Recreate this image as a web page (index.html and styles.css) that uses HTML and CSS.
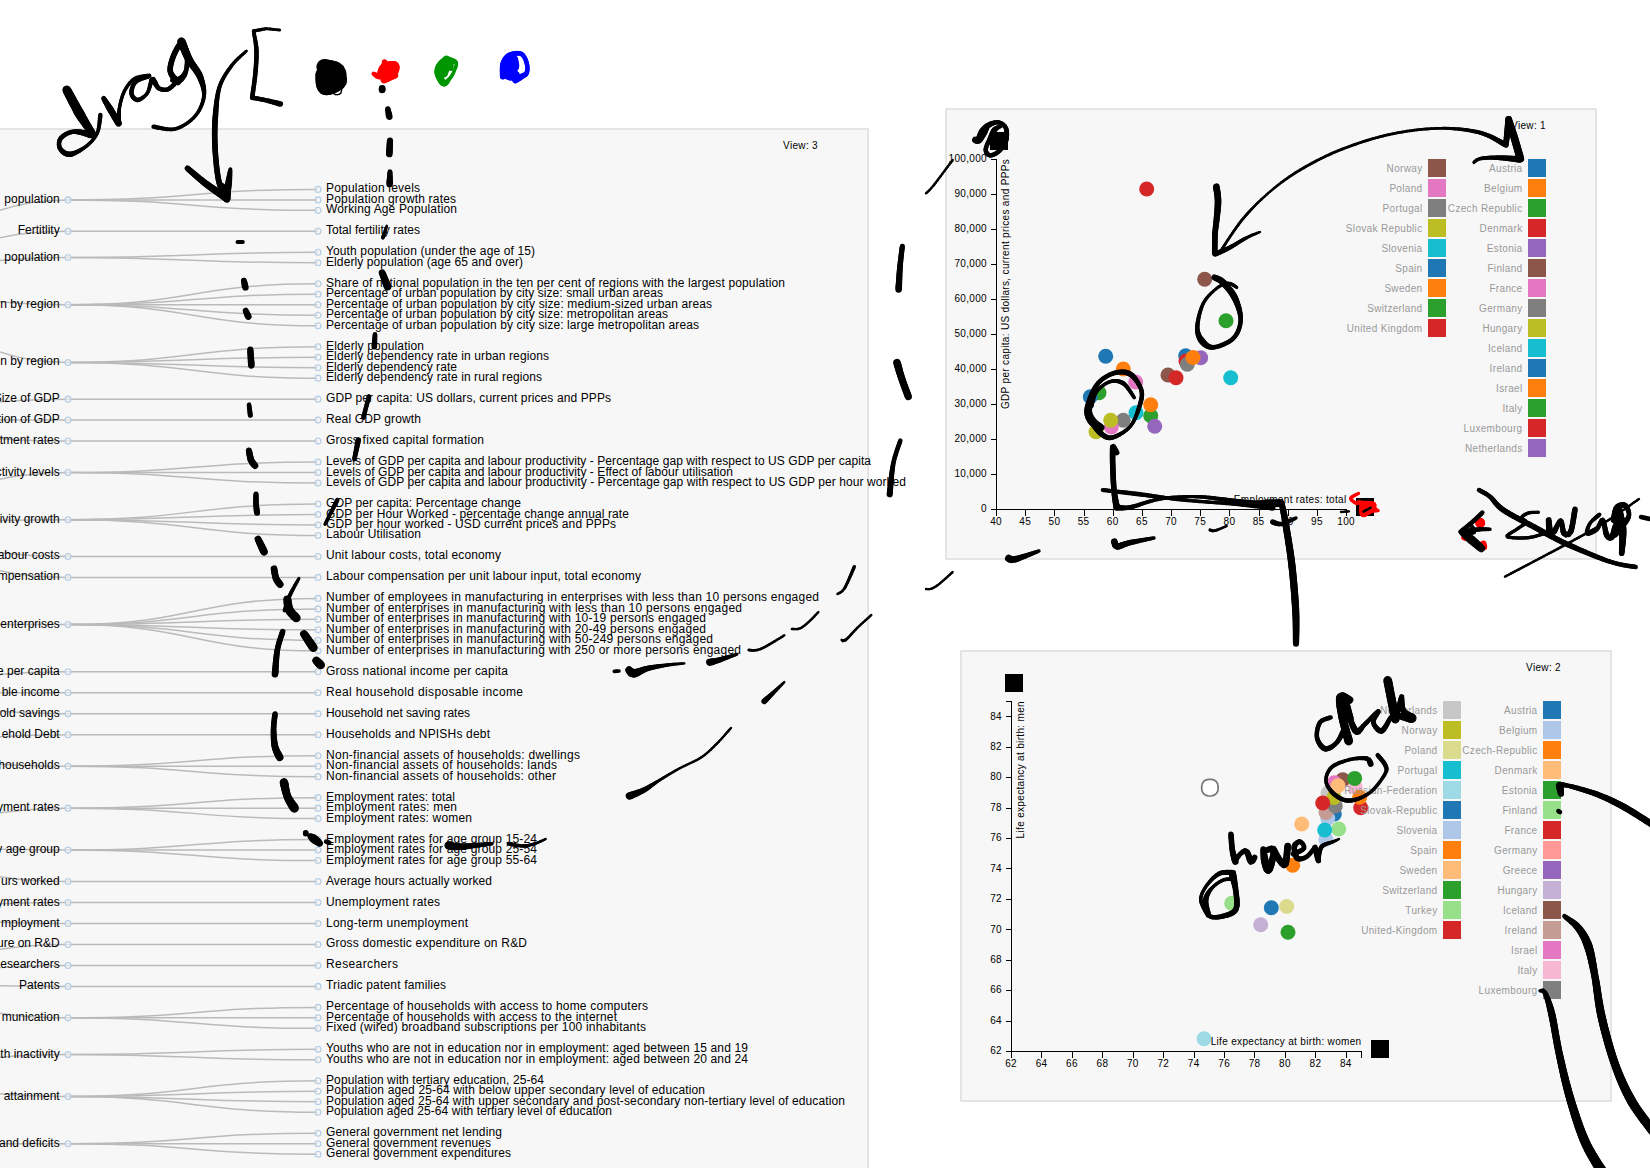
FILE: index.html
```html
<!DOCTYPE html>
<html lang="en">
<head>
<meta charset="utf-8">
<title>Indicator views</title>
<link rel="stylesheet" href="styles.css">
</head>
<body>
<main class="board">
  <section class="view view-tree">
    <svg id="tree" class="tree" width="868" height="1040"></svg>
  </section>
  <div class="charts">
    <section class="view"><svg id="view1" class="chart" width="652" height="452" viewBox="-1 -1 652 452"></svg></section>
    <section class="view view-offset"><svg id="view2" class="chart" width="652" height="452" viewBox="-1 -1 652 452"></svg></section>
  </div>
  <svg id="ink" class="ink" width="1650" height="1168"></svg>
</main>
<script src="script.js"></script>
</body>
</html>
```
FILE: styles.css
```css
body {
  margin: 0;
  background: #fff;
  font-family: "Liberation Sans", Arial, sans-serif;
}

.board {
  position: relative;
  display: flex;
  width: 1650px;
  height: 1168px;
  overflow: hidden;
}

.view-tree {
  flex: none;
  width: 868px;
  padding-top: 128px;
}

.charts {
  display: flex;
  flex-direction: column;
  gap: 90px;
  padding: 108px 0 0 77px;
}

.view svg {
  display: block;
}

.view-offset {
  margin-left: 15px;
}

.tree,
.chart {
  overflow: visible;
}

.ink {
  position: absolute;
  left: 0;
  top: 0;
  pointer-events: none;
}

.panel {
  fill: #f7f7f7;
  stroke: #ddd;
  stroke-width: 1.5;
}

.link {
  fill: none;
  stroke: #bababa;
  stroke-width: 1.5;
}

.node {
  fill: #f7f7f7;
  fill-opacity: 0.6;
  stroke: #b9cfe4;
  stroke-width: 1.3;
}

.label {
  font-size: 12px;
  fill: #000;
}

.small {
  font-size: 10px;
  letter-spacing: 0.33px;
  fill: #000;
}

.legend {
  fill: #999;
}

.axis {
  fill: none;
  stroke: #000;
  stroke-width: 1;
  shape-rendering: crispEdges;
}

.hollow {
  fill: #fff;
  stroke: #777;
  stroke-width: 1.7;
}

.end {
  text-anchor: end;
}

.middle {
  text-anchor: middle;
}
```
FILE: script.js
```js
const NS = "http://www.w3.org/2000/svg";

function add(parent, tag, attrs, text) {
  const el = document.createElementNS(NS, tag);
  for (const k in attrs) el.setAttribute(k, attrs[k]);
  if (text !== undefined) el.textContent = text;
  parent.appendChild(el);
  return el;
}

/* ---------- indicator tree ---------- */

const topics = [
  [["population", ["Population levels", "Population growth rates", "Working Age Population"]],
   ["Fertitlity", ["Total fertility rates"]],
   ["population", ["Youth population (under the age of 15)", "Elderly population (age 65 and over)"]],
   ["n by region", ["Share of national population in the ten per cent of regions with the largest population", "Percentage of urban population by city size: small urban areas", "Percentage of urban population by city size: medium-sized urban areas", "Percentage of urban population by city size: metropolitan areas", "Percentage of urban population by city size: large metropolitan areas"]],
   ["n by region", ["Elderly population", "Elderly dependency rate in urban regions", "Elderly dependency rate", "Elderly dependency rate in rural regions"]]],
  [["Size of GDP", ["GDP per capita: US dollars, current prices and PPPs"]],
   ["tion of GDP", ["Real GDP growth"]],
   ["tment rates", ["Gross fixed capital formation"]]],
  [["ctivity levels", ["Levels of GDP per capita and labour productivity - Percentage gap with respect to US GDP per capita", "Levels of GDP per capita and labour productivity - Effect of labour utilisation", "Levels of GDP per capita and labour productivity - Percentage gap with respect to US GDP per hour worked"]],
   ["tivity growth", ["GDP per capita: Percentage change", "GDP per Hour Worked - percentage change annual rate", "GDP per hour worked - USD current prices and PPPs", "Labour Utilisation"]],
   ["abour costs", ["Unit labour costs, total economy"]],
   ["mpensation", ["Labour compensation per unit labour input, total economy"]]],
  [["enterprises", ["Number of employees in manufacturing in enterprises with less than 10 persons engaged", "Number of enterprises in manufacturing with less than 10 persons engaged", "Number of enterprises in manufacturing with 10-19 persons engaged", "Number of enterprises in manufacturing with 20-49 persons engaged", "Number of enterprises in manufacturing with 50-249 persons engaged", "Number of enterprises in manufacturing with 250 or more persons engaged"]]],
  [["e per capita", ["Gross national income per capita"]],
   ["ble income", ["Real household disposable income"]],
   ["old savings", ["Household net saving rates"]]],
  [["ehold Debt", ["Households and NPISHs debt"]],
   ["households", ["Non-financial assets of households: dwellings", "Non-financial assets of households: lands", "Non-financial assets of households: other"]]],
  [["yment rates", ["Employment rates: total", "Employment rates: men", "Employment rates: women"]],
   ["y age group", ["Employment rates for age group 15-24", "Employment rates for age group 25-54", "Employment rates for age group 55-64"]],
   ["urs worked", ["Average hours actually worked"]]],
  [["yment rates", ["Unemployment rates"]],
   ["mployment", ["Long-term unemployment"]]],
  [["ure on R&D", ["Gross domestic expenditure on R&D"]],
   ["esearchers", ["Researchers"]],
   ["Patents", ["Triadic patent families"]],
   ["munication", ["Percentage of households with access to home computers", "Percentage of households with access to the internet", "Fixed (wired) broadband subscriptions per 100 inhabitants"]]],
  [["uth inactivity", ["Youths who are not in education nor in employment: aged between 15 and 19", "Youths who are not in education nor in employment: aged between 20 and 24"]],
   ["attainment", ["Population with tertiary education, 25-64", "Population aged 25-64 with below upper secondary level of education", "Population aged 25-64 with upper secondary and post-secondary non-tertiary level of education", "Population aged 25-64 with tertiary level of education"]]],
  [["and deficits", ["General government net lending", "General government revenues", "General government expenditures"]]]
];

/* Advance width of every leaf label, top to bottom. */
const leafWidths = [
  94, 130, 131, 94, 209, 197, 459, 337, 386, 342, 373, 98, 223, 131, 216, 285, 95, 158,
  545, 407, 580, 195, 303, 290, 95, 175, 315, 493, 416, 380, 380, 387, 415,
  182, 197, 144, 164, 254, 231, 230, 129, 131, 146, 211, 211, 211, 166, 114, 142, 201, 72, 120,
  322, 291, 320, 422, 422, 218, 379, 519, 286, 176, 165, 185
];

function drawTree() {
  const svg = document.getElementById("tree");
  add(svg, "rect", { class: "panel", x: -50, y: 1, width: 918.2, height: 1200 });
  const links = add(svg, "g", {});
  const nodes = add(svg, "g", {});
  const step = 10.487, xTopic = -182, xGroup = 68, xLeaf = 318;
  let y = 61.4 - 2 * step, n = 0;
  const link = (x0, y0, x1, y1) => {
    const m = (x0 + x1) / 2;
    add(links, "path", { class: "link", d: `M${x0},${y0}C${m},${y0} ${m},${y1} ${x1},${y1}` });
  };
  for (const topic of topics) {
    const groupYs = [];
    for (const [name, leaves] of topic) {
      y += step;
      const ys = leaves.map(() => (y += step));
      const gy = (ys[0] + ys[ys.length - 1]) / 2;
      groupYs.push(gy);
      leaves.forEach((leaf, i) => {
        link(xGroup, gy, xLeaf, ys[i]);
        add(nodes, "circle", { class: "node", cx: xLeaf, cy: ys[i], r: 2.9 });
        add(nodes, "text", { class: "label", x: 326, y: Math.round(ys[i] + 3.02), textLength: leafWidths[n++] }, leaf);
      });
      add(nodes, "circle", { class: "node", cx: xGroup, cy: gy, r: 2.9 });
      add(nodes, "text", { class: "label end", x: 59.7, y: Math.round(gy + 3.02) }, name);
    }
    const ty = (groupYs[0] + groupYs[groupYs.length - 1]) / 2;
    groupYs.forEach(gy => link(xTopic, ty, xGroup, gy));
  }
  add(svg, "text", { class: "small end", x: 818, y: 21 }, "View: 3");
}

/* ---------- scatter plots ---------- */

const C10 = ["#1f77b4", "#ff7f0e", "#2ca02c", "#d62728", "#9467bd", "#8c564b", "#e377c2", "#7f7f7f", "#bcbd22", "#17becf"];
const C20 = ["#1f77b4", "#aec7e8", "#ff7f0e", "#ffbb78", "#2ca02c", "#98df8a", "#d62728", "#ff9896", "#9467bd", "#c5b0d5", "#8c564b", "#c49c94", "#e377c2", "#f7b6d2", "#7f7f7f", "#c7c7c7", "#bcbd22", "#dbdb8d", "#17becf", "#9edae5"];

function drawChart(o) {
  const svg = document.getElementById(o.id);
  add(svg, "rect", { class: "panel", x: 0, y: 0, width: 650, height: 450 });
  const sx = v => 50.5 + 350 * (v - o.x[0]) / (o.x[1] - o.x[0]);
  const sy = v => 400.5 - 350 * (v - o.y[0]) / (o.y[1] - o.y[0]);
  add(svg, "path", { class: "axis", d: "M44.5,50.5H50.5V400.5H44.5M50.5,406.5V400.5H400.5V406.5" });
  for (let v = o.x[0]; v <= o.x[1]; v += o.x[2]) {
    add(svg, "path", { class: "axis", d: `M${sx(v)},400.5v6` });
    add(svg, "text", { class: "small middle", x: sx(v) - 0.4, y: 416 }, v);
  }
  for (let v = o.y[0]; v <= o.y[1]; v += o.y[2]) {
    add(svg, "path", { class: "axis", d: `M44.5,${sy(v)}h6` });
    add(svg, "text", { class: "small end", x: 41, y: Math.round(sy(v) + 2.8) }, v.toLocaleString("en-US"));
  }
  add(svg, "rect", { x: 44, y: 23, width: 18, height: 18 });
  add(svg, "rect", { x: 410, y: 389, width: 18, height: 18 });
  for (const [x, y, c] of o.dots)
    add(svg, "circle", { cx: x - o.left, cy: y - o.top, r: 7.5, fill: c });
  if (o.hollow) add(svg, "rect", { class: "hollow", x: 240.7, y: 128.4, width: 16.4, height: 16.6, rx: 7, ry: 7 });
  o.countries.forEach((name, i) => {
    const x = i < 15 ? 582 : 482, y = 50 + 20 * (i % 15);
    add(svg, "rect", { x, y, width: 18, height: 18, fill: o.palette[i % o.palette.length] });
    add(svg, "text", { class: "small legend end", x: x - 5.5, y: y + 13 }, name);
  });
  add(svg, "text", { class: "small end", x: 400.5, y: 394 }, o.xLabel);
  add(svg, "text", { class: "small end", x: -50, y: 63, transform: "rotate(-90)" }, o.yLabel);
  add(svg, "text", { class: "small end", x: 600, y: 20 }, o.title);
}

drawTree();

drawChart({
  id: "view1", left: 946, top: 109, title: "View: 1", palette: C10,
  x: [40, 100, 5], y: [0, 100000, 10000],
  xLabel: "Employment rates: total",
  yLabel: "GDP per capita: US dollars, current prices and PPPs",
  countries: ["Austria", "Belgium", "Czech Republic", "Denmark", "Estonia", "Finland", "France", "Germany", "Hungary", "Iceland", "Ireland", "Israel", "Italy", "Luxembourg", "Netherlands", "Norway", "Poland", "Portugal", "Slovak Republic", "Slovenia", "Spain", "Sweden", "Switzerland", "United Kingdom"],
  dots: [[1146.7, 189, C10[3]], [1204.7, 279.3, C10[5]], [1226, 320.7, C10[2]], [1105.7, 356.3, C10[0]], [1123.3, 369, C10[1]],
    [1185.7, 355.7, C10[0]], [1186, 361, C10[3]], [1187.3, 364.3, C10[7]], [1200.7, 357.7, C10[4]], [1193, 357.5, C10[1]],
    [1168, 375, C10[5]], [1176, 377.7, C10[3]], [1230.7, 377.7, C10[9]], [1135.7, 382, C10[6]], [1099, 392.7, C10[2]], [1090.3, 396.7, C10[0]],
    [1150.7, 415.7, C10[2]], [1150.7, 404.7, C10[1]], [1136, 412.7, C10[9]], [1154.7, 426.3, C10[4]],
    [1123.3, 420.3, C10[7]], [1111.3, 427, C10[6]], [1110.7, 420.3, C10[8]], [1096, 431.7, C10[8]]]
});

drawChart({
  id: "view2", left: 961, top: 651, title: "View: 2", palette: C20, hollow: true,
  x: [62, 85, 2], y: [62, 85, 2],
  xLabel: "Life expectancy at birth: women",
  yLabel: "Life expectancy at birth: men",
  countries: ["Austria", "Belgium", "Czech-Republic", "Denmark", "Estonia", "Finland", "France", "Germany", "Greece", "Hungary", "Iceland", "Ireland", "Israel", "Italy", "Luxembourg", "Netherlands", "Norway", "Poland", "Portugal", "Russian-Federation", "Slovak-Republic", "Slovenia", "Spain", "Sweden", "Switzerland", "Turkey", "United-Kingdom"],
  dots: [[1301.7, 824, C20[3]], [1292.7, 865.3, C20[2]], [1231.7, 903.3, C20[5]], [1271.3, 907.7, C20[0]], [1286.7, 906.5, C20[17]],
    [1260.7, 924.7, C20[9]], [1288, 932.3, C20[4]], [1204, 1038.7, C20[19]],
    [1334.3, 814, C20[0]], [1327.7, 818.5, C20[1]], [1326, 812.5, C20[11]], [1328, 793, C20[15]], [1335.3, 806, C20[14]], [1334, 797.5, C20[16]],
    [1355.3, 787, C20[13]], [1360.7, 807.7, C20[6]], [1359.7, 797.2, C20[2]], [1342.7, 779.7, C20[10]], [1334.3, 782.8, C20[12]],
    [1338, 785.8, C20[3]], [1354.7, 778.4, C20[4]], [1322.7, 803, C20[6]], [1338.7, 829, C20[5]], [1326, 839.3, C20[1]], [1324.7, 830, C20[18]]]
});

/* ---------- pen notes ----------
   Each sheet has an origin and a unit; a stroke is a list of x, y, pen width. */

const sheets = [
  { at: [0, 0], unit: [1 / 2.8, 1 / 3], strokes: [
    [187,270,8, 225,345,9, 262,406,6], [256,404,7, 205,395,4, 170,415,4, 168,445,4, 195,463,5, 240,440,3, 272,400,3, 281,345,4],
    [290,295,4, 310,330,6, 332,370,6], [332,370,5, 335,320,3, 350,270,3, 378,235,3, 418,226,3],
    [418,228,4, 380,245,4, 368,280,4, 385,300,4, 412,280,3, 425,240,4, 432,245,5, 445,265,4, 470,268,4, 495,245,4],
    [498,246,6, 477,215,5, 485,170,5, 508,130,5, 524,165,5, 520,215,4, 502,240,6, 484,240,5],
    [508,125,8, 530,180,7, 560,230,6, 571,290,3.5, 545,350,3, 490,387,3, 430,380,4],
    [783,90,2.5, 745,86,2.5], [745,86,2.5, 710,93,3], [710,93,3, 718,150,4, 715,220,4, 706,293,4], [706,293,4, 745,301,4, 785,312,5],
    [690,153,2.5, 650,195,3, 615,260,3.5, 603,350,5, 602,440,5, 612,540,5, 632,590,6],
    [525,505,5, 575,550,6, 635,595,7], [645,508,3, 640,550,6, 635,598,6], [622,560,6, 634,585,8],
    [908,201,14, 940,215,18, 952,232,11, 945,250,14, 910,262,14, 905,225,13, 930,232,20], [957,262,1, 954,280,1, 940,284,1, 930,277,1],
    [1070,265,6, 1070,270,6], [1086,327,4.5, 1090,350,6], [1092,422,5.5, 1090,462,6], [1092,515,4, 1091,552,6],
    [1083,678,2, 1072,713,3.5], [1070,818,6, 1085,860,7], [665,726,3.5, 680,726,3.5], [683,842,5, 687,862,6] ] },
  { color: "#f00", at: [0, 0], unit: [1 / 2.8, 1 / 3], strokes: [
    [1046,221,3, 1062,228,5, 1080,205,11, 1103,199,9, 1092,220,13, 1075,240,6], [1077,186,4, 1078,200,6], [1068,228,3, 1103,225,8] ] },
  { color: "#009600", at: [0, 0], unit: [1 / 2.8, 1 / 3], strokes: [
    [1250,178,6, 1232,200,8, 1228,222,7, 1243,250,6, 1262,232,3, 1272,212,3, 1277,188,3, 1252,180,6, 1248,195,9, 1242,220,8], [1262,185,5, 1262,205,5] ] },
  { color: "#00f", at: [0, 0], unit: [1 / 2.8, 1 / 3], strokes: [
    [1408,230,5, 1412,190,7, 1428,165,5, 1460,162,4, 1475,190,4, 1475,218,4, 1460,230,5, 1443,240,6], [1425,190,10, 1424,220,12, 1442,226,9], [1440,178,6, 1440,200,9] ] },
  { at: [0, 280], unit: [1 / 3, 1 / 3], strokes: [
    [737,92,5, 745,110,6], [751,209,5.5, 754,256,6], [747,374,4, 751,406,4.5], [747,512,5.5, 753,540,6, 765,557,6],
    [768,642,4.5, 768,670,5, 771,698,5.5], [774,777,6, 792,815,7], [822,866,6, 828,895,6, 840,913,6.5],
    [897,895,2.5, 870,945,3.5, 853,992,3], [862,958,7, 868,990,8, 889,1014,8], [848,1055,5, 832,1110,5, 825,1183,6],
    [912,1062,7, 940,1103,8], [949,1142,7, 962,1155,8], [1125,163,4, 1123,200,5], [1107,349,4, 1090,413,4], [1075,480,5, 1063,538,4], [1012,660,4, 975,733,3] ] },
  { at: [0, 680], unit: [1 / 2.8, 1 / 3], strokes: [
    [770,102,5, 766,150,5, 770,200,6, 783,232,7], [795,307,8, 805,350,7, 824,384,8.5], [856,458,5, 856,461,5],
    [868,468,3, 882,479,8, 895,490,6], [913,485,4, 922,488,4], [1256,496,8, 1290,500,6, 1378,491,3], [1424,491,3.5, 1465,498,3, 1500,490,2.5, 1528,477,2] ] },
  { at: [300, 400], unit: [0.3954, 1 / 3], strokes: [
    [1402,500,3, 1377,565,2.5, 1359,582,2], [1244,687,2, 1265,685,2, 1290,662,2, 1311,636,2], [1370,720,2, 1380,720,2.5, 1410,683,2, 1445,645,2],
    [1135,750,2.5, 1165,747,2.2, 1225,706,2], [1036,787,7, 1060,780,5, 1105,763,2.5], [795,814,3.5, 807,813,3],
    [832,810,6, 845,820,8, 880,805,5, 930,795,3, 972,790,2], [1174,904,5.5, 1200,875,3.5, 1225,846,2],
    [833,1188,7, 870,1170,5, 910,1140,2.5, 960,1105,2, 1015,1072,2, 1055,1030,2, 1090,984,2] ] },
  { at: [820, 140], unit: [1 / 3, 1 / 3], strokes: [
    [398,60,2, 340,137,2, 318,160,2], [247,319,4.5, 240,380,5, 236,448,6], [231,668,7, 245,715,6.5, 265,770,6.5],
    [241,902,4, 220,970,4, 209,1063,5.5], [398,1296,2, 360,1330,2, 335,1346,2, 318,1347,2] ] },
  { at: [900, 90], unit: [1 / 3, 1 / 3], strokes: [
    [226,150,6, 236,150,6, 250,125,8, 265,106,5, 295,97,4, 318,115,4, 316,155,5, 295,185,4, 270,196,4, 257,180,4, 270,145,4, 285,118,5, 305,108,3],
    [949,290,6, 954,340,6, 945,430,5], [945,430,5, 944,490,5], [945,492,5, 985,475,4, 1040,443,3, 1080,426,2],
    [943,562,5, 970,578,6, 1005,625,6, 1022,690,4, 1000,745,4, 940,772,4, 905,752,6, 892,710,4, 910,640,3, 950,595,2.5, 985,580,3, 1010,592,3] ] },
  { at: [1250, 90], unit: [1 / 3, 1 / 3], strokes: [
    [-85,478,2.4, -20,385,2.4, 60,305,2, 150,240,2.4, 270,180,2.4, 420,133,2.4, 570,115,2.4, 690,128,3.5, 768,165,5],
    [768,162,5, 776,88,6], [776,88,6, 795,150,7, 811,206,7], [672,217,3, 690,206,3, 740,203,4, 810,208,6] ] },
  { at: [900, 330], unit: [1 / 3, 1 / 3], strokes: [
    [603,293,6, 575,272,8, 565,235,7, 590,165,4, 640,130,4, 690,132,5, 724,180,4, 718,230,4, 690,290,3, 635,323,4, 600,308,5, 575,275,5],
    [575,230,3, 590,185,3, 630,155,3, 670,160,4, 703,203,3],
    [640,350,5, 650,368,5], [638,352,5, 638,400,5, 642,480,5, 650,532,6], [650,532,6, 690,532,4, 780,507,3, 890,500,3, 1000,512,4, 1130,525,4],
    [608,480,3.5, 720,493,4, 850,510,3, 1000,522,3, 1120,535,4], [1040,523,4, 1100,519,6, 1142,520,7],
    [1145,520,5, 1155,570,6, 1175,700,6.5, 1187,840,6.5, 1188,941,5.5], [1118,576,5, 1145,582,4, 1188,564,3],
    [930,600,3, 945,602,2.5, 980,588,2], [643,635,6, 652,649,6, 690,638,5, 762,624,3], [326,685,7, 345,688,6, 417,663,3] ] },
  { color: "#f00", at: [1250, 440], unit: [1 / 3, 1 / 3], strokes: [
    [326,160,2.5, 302,175,3, 318,190,3], [325,188,4, 368,195,5, 345,203,11, 340,222,5, 360,208,8, 385,212,2.5],
    [690,248,9, 691,249,9], [700,312,7, 703,322,5], [640,293,4, 645,296,4] ] },
  { at: [1250, 440], unit: [1 / 3, 1 / 3], strokes: [
    [340,215,2, 362,203,2], [273,216,2, 297,214,2],
    [697,218,4, 665,248,4, 632,275,4], [632,275,4, 690,268,4, 720,268,3], [636,277,5, 665,300,8, 694,325,7], [640,274,4, 670,275,5, 665,260,4],
    [687,150,4, 720,170,4, 760,210,5, 860,265,5, 950,312,5, 1080,365,4, 1157,381,4], [765,410,2, 950,312,2.2, 1060,250,2, 1167,177,2],
    [865,217,3, 835,219,3, 815,233,3, 828,247,3, 800,268,3, 772,290,3, 835,293,3, 885,280,3],
    [896,240,5, 900,275,6, 912,275,5, 932,242,4, 942,280,5, 962,275,5, 975,208,5],
    [1048,224,4, 1020,250,3, 1012,280,4, 1040,268,4, 1058,240,4, 1070,285,5, 1085,292,5, 1095,260,5],
    [1105,200,6, 1118,270,7, 1115,340,5], [1092,240,6, 1100,203,5, 1125,196,5, 1137,225,4, 1120,255,5, 1095,285,5], [1100,220,7, 1103,260,7],
    [1173,231,4, 1200,237,4] ] },
  { at: [940, 640], unit: [1 / 3, 1 / 3], strokes: [
    [878,704,7, 887,750,5, 890,800,5, 870,822,5, 815,831,4, 790,800,4, 783,770,3, 805,730,3, 840,700,4, 880,698,5],
    [885,718,4, 850,720,3, 815,745,3, 797,780,5, 805,825,5],
    [873,583,5, 877,630,5, 886,665,6], [886,660,5, 905,638,4, 920,635,5, 933,664,6, 944,652,5],
    [970,628,5, 975,665,7, 985,690,7, 997,660,6, 1000,628,6, 975,632,5], [1000,628,6, 1020,662,6, 1036,672,6, 1043,618,6],
    [1060,642,5, 1092,625,4, 1080,605,4, 1063,620,5, 1072,655,5, 1100,650,4, 1125,622,4], [1125,622,5, 1135,662,5], [1135,660,4, 1145,620,4, 1180,605,3, 1197,597,2] ] },
  { at: [1270, 640], unit: [1 / 3, 1 / 2.97], strokes: [
    [182,230,4, 150,245,4, 141,290,4, 165,323,5, 200,305,4, 225,260,5], [238,178,7, 212,170,8, 215,220,7, 236,300,8], [225,180,7, 240,235,7],
    [240,235,5, 260,272,6, 285,250,4, 325,212,4, 310,245,4, 335,270,5, 362,230,4], [353,120,8, 365,180,8, 376,235,8], [376,235,5, 395,168,4.5], [395,170,4.5, 400,210,5, 425,232,8], [390,226,5, 425,232,9],
    [302,368,6, 290,352,4, 240,355,3, 185,378,3.5, 168,420,3, 195,460,4, 240,477,4, 300,453,3, 345,398,3, 346,372,4, 323,342,4],
    [873,457,5, 869,433,7], [872,430,5, 900,434,4, 980,458,5, 1060,495,6, 1150,550,6], [865,508,4, 870,511,4],
    [883,820,3.5, 925,855,6.5, 955,910,8, 975,1000,6.5, 995,1120,7.5, 1035,1260,7.5, 1085,1370,8.5, 1150,1460,8.5],
    [810,1042,2.5, 825,1048,4, 845,1110,6.5, 868,1230,6.5, 900,1360,7.5, 945,1490,8.5, 1000,1585,9.5] ] }
];

function drawInk() {
  const svg = document.getElementById("ink");
  const spline = (a, b, c, d, t) =>
    0.5 * (2 * b + (c - a) * t + (2 * a - 5 * b + 4 * c - d) * t * t + (3 * b - a - 3 * c + d) * t * t * t);
  const nib = w => w * 1.06 + 0.25;
  for (const s of sheets) {
    const g = add(svg, "g", { stroke: s.color || "#000", "stroke-linecap": "round" });
    for (const flat of s.strokes) {
      const p = [];
      for (let i = 0; i < flat.length; i += 3)
        p.push([s.at[0] + flat[i] * s.unit[0], s.at[1] + flat[i + 1] * s.unit[1], nib(flat[i + 2])]);
      for (let i = 0; i < p.length - 1; i++) {
        const a = p[Math.max(0, i - 1)], b = p[i], c = p[i + 1], d = p[Math.min(p.length - 1, i + 2)];
        const n = Math.max(2, Math.ceil(Math.hypot(c[0] - b[0], c[1] - b[1]) / 2.5));
        let px = b[0], py = b[1];
        for (let k = 1; k <= n; k++) {
          const t = k / n, x = spline(a[0], b[0], c[0], d[0], t), y = spline(a[1], b[1], c[1], d[1], t);
          add(g, "line", { x1: px.toFixed(2), y1: py.toFixed(2), x2: x.toFixed(2), y2: y.toFixed(2), "stroke-width": (b[2] + (c[2] - b[2]) * t).toFixed(2) });
          px = x; py = y;
        }
      }
    }
  }
}

drawInk();
```
